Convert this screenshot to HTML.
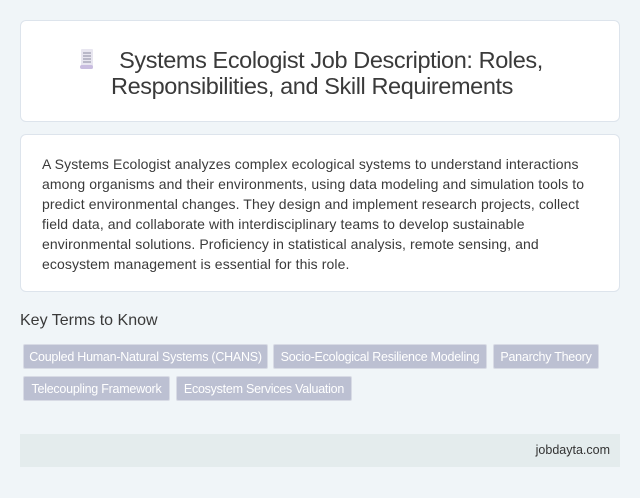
<!DOCTYPE html>
<html><head><meta charset="utf-8"><style>
body{margin:0;background:#f0f5f8;font-family:"Liberation Sans",sans-serif;width:640px;height:498px;overflow:hidden;position:relative}
.c1{position:absolute;left:20px;top:20px;width:598px;height:100px;background:#fff;border:1px solid #dde4ec;border-radius:6px}
.t{position:absolute;left:0;width:598px;text-align:center;font-size:23.5px;color:#3a3a3a;letter-spacing:-0.4px;white-space:nowrap}
.c2{position:absolute;left:20px;top:134px;width:598px;height:156px;background:#fff;border:1px solid #dde4ec;border-radius:6px}
.p{position:absolute;left:21px;top:19px;font-size:14px;line-height:20px;color:#3a3a3a;letter-spacing:0.1px;white-space:nowrap}
.k{position:absolute;left:20px;top:312px;font-size:16px;color:#3a3a3a;letter-spacing:0px}
.tag{position:absolute;height:25px;line-height:25px;background:#bcc0d2;color:#fff;font-size:12.5px;letter-spacing:-0.25px;border-radius:2px;text-align:center;white-space:nowrap;border:1px solid #d8dbe5;box-sizing:border-box}
.f{position:absolute;left:20px;top:434px;width:600px;height:33px;background:#e4eced}
.f span{position:absolute;right:10px;top:9px;font-size:12.5px;color:#333;letter-spacing:0}
</style></head><body>
<div class="c1">
<svg style="position:absolute;left:58px;top:27px" width="16" height="22" viewBox="0 0 16 22"><rect x="2" y="1" width="12" height="20" rx="1" fill="#e8e6f0"/><rect x="1" y="17" width="13" height="4" rx="2" fill="#c9bde0"/><g stroke="#8a8aa0" stroke-width="1"><line x1="4" y1="5" x2="12" y2="5"/><line x1="4" y1="8" x2="12" y2="8"/><line x1="4" y1="11" x2="12" y2="11"/><line x1="4" y1="14" x2="12" y2="14"/></g></svg>
<div class="t" style="top:26px;padding-left:22px;box-sizing:border-box">Systems Ecologist Job Description: Roles,</div>
<div class="t" style="top:52px;left:-8px">Responsibilities, and Skill Requirements</div>
</div>
<div class="c2"><div class="p">A Systems Ecologist analyzes complex ecological systems to understand interactions<br>among organisms and their environments, using data modeling and simulation tools to<br>predict environmental changes. They design and implement research projects, collect<br>field data, and collaborate with interdisciplinary teams to develop sustainable<br>environmental solutions. Proficiency in statistical analysis, remote sensing, and<br>ecosystem management is essential for this role.</div></div>
<div class="k">Key Terms to Know</div>
<div class="tag" style="left:23px;top:344px;width:245px">Coupled Human-Natural Systems (CHANS)</div>
<div class="tag" style="left:273px;top:344px;width:214px">Socio-Ecological Resilience Modeling</div>
<div class="tag" style="left:493px;top:344px;width:106px">Panarchy Theory</div>
<div class="tag" style="left:23px;top:376px;width:147px">Telecoupling Framework</div>
<div class="tag" style="left:176px;top:376px;width:176px">Ecosystem Services Valuation</div>
<div class="f"><span>jobdayta.com</span></div>
</body></html>
